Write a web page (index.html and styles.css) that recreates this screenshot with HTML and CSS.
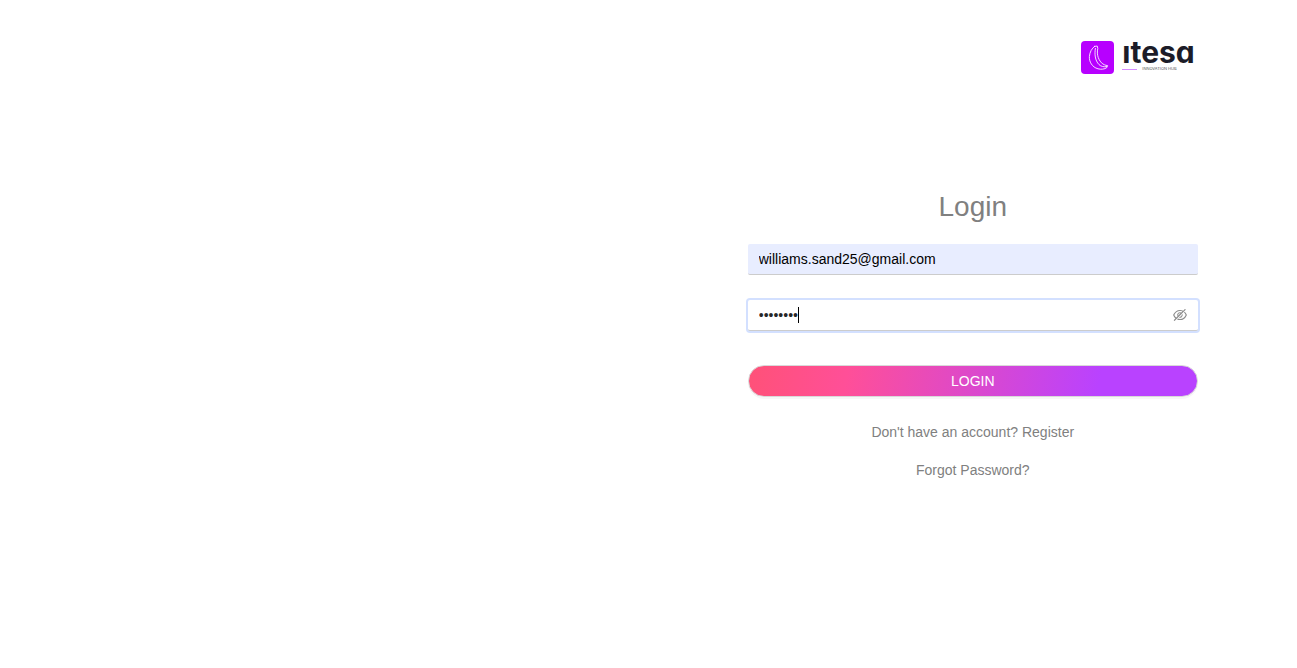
FILE: index.html
```html
<!DOCTYPE html>
<html lang="en">
<head>
<meta charset="utf-8">
<title>Login</title>
<link rel="stylesheet" href="styles.css">
</head>
<body>
<main class="page">
  <section class="panel">
    <header class="brand">
      <svg class="brand-mark" viewBox="0 0 33 33" aria-hidden="true">
        <rect width="33" height="33" rx="4" fill="#b700ff"/>
        <g fill="none" stroke="#fff" stroke-opacity=".85" stroke-width="1" stroke-linejoin="round" stroke-linecap="round">
          <path d="M13.6 5.4 L16.2 5 L16.8 7.4 C15.8 12 16.4 17.5 20.5 21.8 C22.4 23.6 24.4 24.4 26.6 24.6 L25.8 26.6 C23.6 28.3 20 28.6 17 27.8 C11 26.2 8 20.6 8.4 15.4 C8.8 11 10.8 7.4 13.6 5.4 Z"/>
          <path d="M14.4 7.4 C13.4 13 14 19.4 18 23.6 C20 25.4 22.6 26.2 25.6 25.6"/>
        </g>
      </svg>
      <div class="brand-text">
        <span class="brand-name">ıtesa</span>
        <span class="brand-tag">INNOVATION HUB</span>
      </div>
    </header>
    <form class="login">
      <h1 class="title">Login</h1>
      <input class="field field-filled" type="email" aria-label="Email" value="williams.sand25@gmail.com">
      <div class="field field-focused">
        <div class="secret">
          <input class="secret-input" type="password" aria-label="Password" value="password">
          <span class="caret"></span>
        </div>
        <button class="reveal" type="button" aria-label="Show password">
          <svg viewBox="64 64 896 896" width="14" height="14" fill="currentColor" aria-hidden="true">
            <path d="M942.2 486.2Q889.47 375.11 816.7 305l-50.88 50.88C807.31 395.53 843.45 447.4 874.7 512 791.5 684.2 673.4 766 512 766q-72.67 0-133.87-22.38L323 798.75Q408 838 512 838q288.3 0 430.2-300.3a60.29 60.29 0 000-51.5zm-63.57-320.64L836 122.88a8 8 0 00-11.32 0L715.31 232.2Q624.86 186 512 186q-288.3 0-430.2 300.3a60.3 60.3 0 000 51.5q56.69 119.4 136.5 191.41L112.48 835a8 8 0 000 11.31L155.17 889a8 8 0 0011.31 0l712.15-712.12a8 8 0 000-11.32zM149.3 512C232.6 339.8 350.7 258 512 258c54.54 0 104.13 9.36 149.12 28.39l-70.3 70.3a176 176 0 00-238.13 238.13l-83.42 83.42C223.1 637.49 183.3 582.28 149.3 512zm246.7 0a112.11 112.11 0 01146.2-106.69L401.31 546.2A112 112 0 01396 512z"/>
            <path d="M508 624c-3.46 0-6.87-.16-10.25-.47l-52.82 52.82a176.09 176.09 0 00227.42-227.42l-52.82 52.82c.31 3.38.47 6.79.47 10.25a111.94 111.94 0 01-112 112z"/>
          </svg>
        </button>
      </div>
      <button class="submit" type="button">LOGIN</button>
      <nav class="links">
        <a class="link" href="#">Don't have an account? Register</a>
        <a class="link" href="#">Forgot Password?</a>
      </nav>
    </form>
  </section>
</main>
</body>
</html>
```
FILE: styles.css
```css
* { box-sizing: border-box; }

body {
  margin: 0;
  background: #fff;
  color: rgba(0, 0, 0, 0.85);
  font: 14px/22px "Liberation Sans", Arial, sans-serif;
}

.page {
  display: grid;
  grid-template-columns: 1fr 1fr;
  min-height: 100vh;
}

.panel {
  grid-column: 2;
  width: 100%;
  max-width: 450px;
  margin: 0 auto;
  padding-top: 40px;
}

.brand {
  display: flex;
  justify-content: flex-end;
  gap: 8px;
  padding-right: 3px;
}

.brand-mark {
  width: 33px;
  height: 33px;
  margin-top: 1px;
}

.brand-text {
  display: flex;
  flex-direction: column;
  color: #1c1c28;
}

.brand-name {
  font: 700 30px/24px Inter, sans-serif;
  font-feature-settings: "cv11";
}

.brand-tag {
  display: flex;
  align-items: center;
  gap: 5px;
  font: 4px/10px Inter, sans-serif;
  color: #555;
}

.brand-tag::before {
  content: "";
  width: 15px;
  height: 1px;
  background: #d68cff;
}

.login {
  display: flex;
  flex-direction: column;
  margin-top: 111px;
}

.title {
  margin: 0 0 15px;
  color: gray;
  font-size: 28px;
  font-weight: 400;
  line-height: 44px;
  text-align: center;
}

.field {
  width: 100%;
  height: 31px;
  padding: 0 11px;
  border: 0;
  border-bottom: 1px solid #ccc;
  border-radius: 2px;
  color: #000;
  font: inherit;
}

.field-filled { background: #e8edff; }

.field-focused {
  display: flex;
  align-items: center;
  justify-content: space-between;
  margin-top: 25px;
  background: #fff;
  box-shadow: 0 0 0 2px #d3e0ff;
}

.secret {
  position: relative;
  flex: 1;
}

.secret-input {
  display: block;
  width: 100%;
  padding: 0;
  border: 0;
  outline: 0;
  background: none;
  color: rgba(0, 0, 0, 0.85);
  font: inherit;
}

.caret {
  position: absolute;
  top: 3px;
  left: 39px;
  width: 1px;
  height: 16px;
  background: #000;
}

.reveal {
  display: flex;
  padding: 0;
  border: 0;
  background: none;
  color: #8c8c8c;
}

.submit {
  height: 32px;
  margin-top: 34px;
  border: 1px solid #d9d9d9;
  border-radius: 16px;
  background: linear-gradient(99deg, #ff5178 0%, #ff4f98 22%, #b942ff 78%);
  box-shadow: 0 2px 0 rgba(0, 0, 0, 0.03);
  color: #fff;
  font: inherit;
}

.links {
  display: flex;
  flex-direction: column;
  align-items: center;
  gap: 16px;
  margin-top: 24px;
}

.link {
  color: gray;
  text-decoration: none;
}
```
